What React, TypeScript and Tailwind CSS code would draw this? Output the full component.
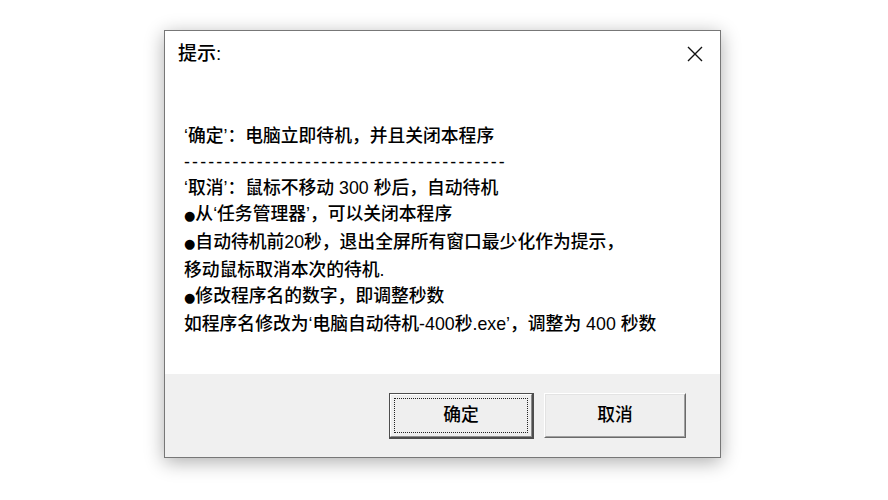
import React from 'react';

const font = { fontFamily: '"Liberation Sans", "Noto Sans CJK SC", sans-serif' };

type BtnProps = { label: string; isDefault?: boolean };

const DialogButton: React.FC<BtnProps> = ({ label, isDefault }) => {
  if (isDefault) {
    return (
      <div className="w-[145px] h-[46px] border border-[#4d4d4d] border-b-2 border-r-2 bg-[#efefef]">
        <div className="h-full w-full border border-t-white border-l-white border-b-[#8a8a8a] border-r-[#8a8a8a] p-[3px]">
          <div className="h-full w-full border border-dotted border-[#222] flex items-center justify-center text-[17.8px] font-medium text-black">
            {label}
          </div>
        </div>
      </div>
    );
  }
  return (
    <div className="w-[142px] h-[45px] border border-t-white border-l-white border-b-[#6a6a6a] border-r-[#6a6a6a] bg-[#efefef]">
      <div className="h-full w-full border border-t-[#e3e3e3] border-l-[#e3e3e3] border-b-[#a0a0a0] border-r-[#a0a0a0] flex items-center justify-center text-[17.8px] font-medium text-black">
        {label}
      </div>
    </div>
  );
};

const lines = [
  '‘确定’：电脑立即待机，并且关闭本程序',
  null,
  '‘取消’：鼠标不移动 300 秒后，自动待机',
  '●从‘任务管理器’，可以关闭本程序',
  '●自动待机前20秒，退出全屏所有窗口最少化作为提示，',
  '移动鼠标取消本次的待机.',
  '●修改程序名的数字，即调整秒数',
  '如程序名修改为‘电脑自动待机-400秒.exe’，调整为 400 秒数',
];

const renderLine = (text: string) => {
  if (text.startsWith('●')) {
    return (
      <>
        <span style={{ fontFamily: '"DejaVu Sans", sans-serif' }} className="text-[13px]">●</span>
        {text.slice(1)}
      </>
    );
  }
  return text;
};

export default function App() {
  return (
    <div className="w-[888px] h-[500px] bg-white pt-[30px] pl-[164px]" style={font}>
      <div className="w-[557px] h-[428px] border border-[#777] bg-white flex flex-col shadow-[0_4px_18px_rgba(0,0,0,0.32)]">
        {/* Title bar */}
        <div className="h-[46px] flex items-center justify-between pl-[13px] pr-[17px]">
          <span className="text-[19px] font-medium text-black">提示:</span>
          <svg width="16" height="16" viewBox="0 0 16 16">
            <path d="M1 1 L15 15 M15 1 L1 15" stroke="#111" strokeWidth="1.4" fill="none" />
          </svg>
        </div>

        {/* Message */}
        <div className="flex-1 pt-[46px] pl-[19px] text-[17.8px] font-medium leading-[26px] text-black">
          {lines.map((l, i) =>
            l === null ? (
              <div key={i} className="tracking-[2.15px]">
                ----------------------------------------
              </div>
            ) : (
              <div key={i} className="whitespace-pre">{renderLine(l)}</div>
            )
          )}
        </div>

        {/* Buttons */}
        <div className="h-[83px] bg-[#f0f0f0] flex justify-end items-start gap-[10px] pt-[19px] pr-[34px]">
          <DialogButton label="确定" isDefault />
          <DialogButton label="取消" />
        </div>
      </div>
    </div>
  );
}
